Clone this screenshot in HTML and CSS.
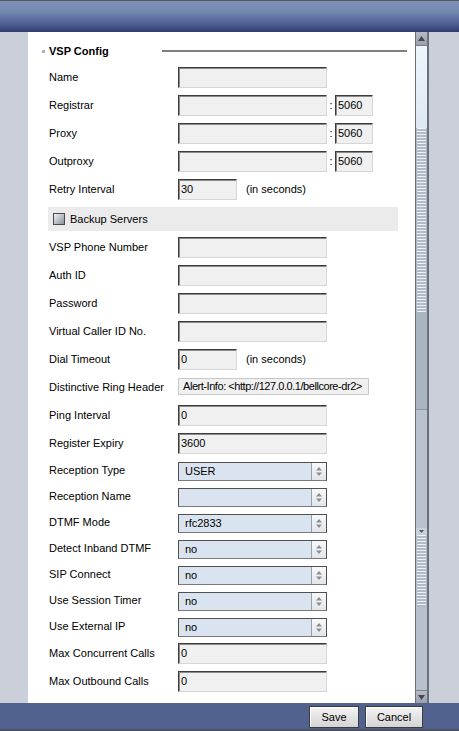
FILE: index.html
```html
<!DOCTYPE html>
<html>
<head>
<meta charset="utf-8">
<link rel="stylesheet" href="styles.css">
</head>
<body>
<div class="app">
  <header class="topbar"></header>
  <div class="middle">
    <div class="gutter"></div>
    <main class="content">
      <div class="section-head">
        <span class="bullet"></span>
        <span class="section-title">VSP Config</span>
        <span class="section-line"></span>
      </div>

      <div class="row"><span class="label">Name</span><span class="field"></span></div>
      <div class="row"><span class="label">Registrar</span><span class="field"></span><span class="colon">:</span><span class="field port">5060</span></div>
      <div class="row"><span class="label">Proxy</span><span class="field"></span><span class="colon">:</span><span class="field port">5060</span></div>
      <div class="row"><span class="label">Outproxy</span><span class="field"></span><span class="colon">:</span><span class="field port">5060</span></div>
      <div class="row"><span class="label">Retry Interval</span><span class="field short">30</span><span class="hint">(in seconds)</span></div>

      <div class="backup-bar"><span class="checkbox"></span><span class="backup-text">Backup Servers</span></div>

      <div class="row"><span class="label">VSP Phone Number</span><span class="field"></span></div>
      <div class="row"><span class="label">Auth ID</span><span class="field"></span></div>
      <div class="row"><span class="label">Password</span><span class="field"></span></div>
      <div class="row"><span class="label">Virtual Caller ID No.</span><span class="field"></span></div>
      <div class="row"><span class="label">Dial Timeout</span><span class="field short">0</span><span class="hint">(in seconds)</span></div>
      <div class="row"><span class="label">Distinctive Ring Header</span><span class="field readonly">Alert-Info: &lt;http://127.0.0.1/bellcore-dr2&gt;</span></div>
      <div class="row"><span class="label">Ping Interval</span><span class="field">0</span></div>
      <div class="row"><span class="label">Register Expiry</span><span class="field">3600</span></div>

      <div class="row srow"><span class="label">Reception Type</span><span class="select"><span class="val">USER</span><span class="spin"><svg width="14" height="17" viewBox="0 0 14 17"><path d="M4 7.5h6l-3-3.5z" fill="#8a8f96"/><path d="M4 9.5h6l-3 3.5z" fill="#8a8f96"/></svg></span></span></div>
      <div class="row srow"><span class="label">Reception Name</span><span class="select"><span class="val"></span><span class="spin"><svg width="14" height="17" viewBox="0 0 14 17"><path d="M4 7.5h6l-3-3.5z" fill="#8a8f96"/><path d="M4 9.5h6l-3 3.5z" fill="#8a8f96"/></svg></span></span></div>
      <div class="row srow"><span class="label">DTMF Mode</span><span class="select"><span class="val">rfc2833</span><span class="spin"><svg width="14" height="17" viewBox="0 0 14 17"><path d="M4 7.5h6l-3-3.5z" fill="#8a8f96"/><path d="M4 9.5h6l-3 3.5z" fill="#8a8f96"/></svg></span></span></div>
      <div class="row srow"><span class="label">Detect Inband DTMF</span><span class="select"><span class="val">no</span><span class="spin"><svg width="14" height="17" viewBox="0 0 14 17"><path d="M4 7.5h6l-3-3.5z" fill="#8a8f96"/><path d="M4 9.5h6l-3 3.5z" fill="#8a8f96"/></svg></span></span></div>
      <div class="row srow"><span class="label">SIP Connect</span><span class="select"><span class="val">no</span><span class="spin"><svg width="14" height="17" viewBox="0 0 14 17"><path d="M4 7.5h6l-3-3.5z" fill="#8a8f96"/><path d="M4 9.5h6l-3 3.5z" fill="#8a8f96"/></svg></span></span></div>
      <div class="row srow"><span class="label">Use Session Timer</span><span class="select"><span class="val">no</span><span class="spin"><svg width="14" height="17" viewBox="0 0 14 17"><path d="M4 7.5h6l-3-3.5z" fill="#8a8f96"/><path d="M4 9.5h6l-3 3.5z" fill="#8a8f96"/></svg></span></span></div>
      <div class="row srow"><span class="label">Use External IP</span><span class="select"><span class="val">no</span><span class="spin"><svg width="14" height="17" viewBox="0 0 14 17"><path d="M4 7.5h6l-3-3.5z" fill="#8a8f96"/><path d="M4 9.5h6l-3 3.5z" fill="#8a8f96"/></svg></span></span></div>

      <div class="row"><span class="label">Max Concurrent Calls</span><span class="field">0</span></div>
      <div class="row"><span class="label">Max Outbound Calls</span><span class="field">0</span></div>
    </main>
    <div class="scrollbar">
      <div class="sb-btn"><svg width="11" height="13" viewBox="0 0 11 13"><path d="M2 9h7L5.5 4z" fill="#3f4756"/></svg></div>
      <div class="sb-track-light"></div>
      <div class="sb-grip"><div class="grip-lines"></div></div>
      <div class="sb-thumb-end"></div>
      <div class="sb-track"></div>
      <div class="sb-mini"><svg width="11" height="7" viewBox="0 0 11 7"><path d="M3 2h5L5.5 5z" fill="#505868"/></svg></div>
      <div class="sb-grip2"><div class="grip-lines"></div></div>
      <div class="sb-plain"></div>
      <div class="sb-btn down"><svg width="11" height="13" viewBox="0 0 11 13"><path d="M2 4h7L5.5 9z" fill="#3f4756"/></svg></div>
    </div>
    <div class="gutter right"></div>
  </div>
  <footer class="bottombar">
    <button class="btn save">Save</button>
    <button class="btn cancel">Cancel</button>
  </footer>
</div>
</body>
</html>
```
FILE: styles.css
```css
* { box-sizing: border-box; }
html, body { margin: 0; padding: 0; }
body {
  font-family: "Liberation Sans", Arial, sans-serif;
  font-size: 11px;
  color: #000;
  background: #cbcfd9;
}
.app {
  width: 459px;
  height: 731px;
  display: flex;
  flex-direction: column;
  overflow: hidden;
}
.topbar {
  height: 32px;
  flex: none;
  border-top: 1px solid #5a5a5e;
  background: linear-gradient(#8091b6 0%, #7387b0 35%, #4e5f92 75%, #2d3b72 100%);
}
.middle {
  flex: 1;
  display: flex;
  min-height: 0;
}
.gutter {
  width: 28px;
  flex: none;
  background: #cbcfd9;
}
.gutter.right { width: 30px; }
.content {
  width: 387px;
  flex: none;
  background: #fff;
  padding-top: 7px;
  overflow: hidden;
}
.section-head {
  height: 24px;
  display: flex;
  align-items: center;
}
.bullet {
  width: 3px;
  height: 3px;
  margin-left: 14px;
  margin-right: 4px;
  background: #a9b4c8;
}
.section-title { font-weight: bold; }
.section-line {
  width: 245px;
  height: 2px;
  margin-left: auto;
  margin-right: 8px;
  background: #808080;
}
.row {
  display: flex;
  height: 28px;
  padding-left: 21px;
}
.label {
  width: 129px;
  flex: none;
  line-height: 28px;
  white-space: nowrap;
}
.field {
  width: 149px;
  height: 21px;
  margin-top: 4px;
  flex: none;
  background: #f0f0f0;
  border: 1px solid;
  border-color: #3c3c3c #d6d6d6 #d6d6d6 #3c3c3c;
  box-shadow: inset 1px 1px 0 #8a8a8a;
  padding-left: 2px;
  line-height: 19px;
  white-space: nowrap;
  overflow: hidden;
}
.field.short { width: 59px; }
.field.port { width: 38px; }
.field.readonly {
  width: 191px;
  height: 17px;
  margin-top: 5px;
  border-color: #c8c8c8;
  box-shadow: none;
  padding-left: 4px;
  line-height: 15px;
  letter-spacing: -0.45px;
}
.colon {
  width: 8px;
  text-align: center;
  line-height: 28px;
}
.hint {
  margin-left: 9px;
  line-height: 28px;
}
.backup-bar {
  margin: 4px 0 2px 20px;
  width: 350px;
  height: 24px;
  background: #ebebeb;
  display: flex;
  align-items: center;
}
.checkbox {
  width: 12px;
  height: 12px;
  margin-left: 5px;
  margin-right: 5px;
  border: 1px solid #4a4a4a;
  background: linear-gradient(135deg, #eef0f4 0%, #b4b8c0 60%, #8c9098 100%);
}
.row.srow { height: 26px; }
.srow .label { line-height: 26px; }
.select {
  width: 149px;
  height: 19px;
  margin-top: 5px;
  flex: none;
  display: flex;
  background: #dae4f0;
  border: 1px solid #505050;
  border-bottom-color: #7a7a7a;
}
.select .val {
  flex: 1;
  padding-left: 6px;
  line-height: 16px;
}
.spin {
  width: 15px;
  flex: none;
  border-left: 1px solid #9aa0a8;
  background: linear-gradient(#f6f8fa, #e2e6ea);
  display: flex;
  align-items: center;
  justify-content: center;
}
.spin svg { display: block; }
.scrollbar {
  width: 14px;
  flex: none;
  display: flex;
  flex-direction: column;
  border-left: 1px solid #6c7078;
  border-right: 2px solid #6a707c;
  background: #b6c1cd;
}
.sb-btn {
  height: 14px;
  flex: none;
  background: linear-gradient(#b8bcc4, #9aa0aa);
  border-bottom: 1px solid #7a808a;
  display: flex;
  align-items: center;
  justify-content: center;
}
.sb-btn.down {
  height: 13px;
  border-bottom: none;
  border-top: 1px solid #7a808a;
}
.sb-track-light {
  height: 82px;
  flex: none;
  background: linear-gradient(#eef6fc, #dce8f2);
}
.sb-grip {
  height: 184px;
  flex: none;
  background: #b0bbc7;
  padding: 0 1px 0 1px;
}
.grip-lines {
  height: 100%;
  background: repeating-linear-gradient(#eef2f6 0 1px, #b0bbc7 1px 3px);
}
.sb-thumb-end {
  height: 98px;
  flex: none;
  background: #aab5c2;
  border-bottom: 1px solid #8c96a2;
}
.sb-track {
  height: 118px;
  flex: none;
  background: #b8c3cf;
}
.sb-mini {
  height: 7px;
  flex: none;
  background: #c8d0da;
  display: flex;
  justify-content: center;
}
.sb-grip2 {
  height: 72px;
  flex: none;
  background: #b6c1cd;
  padding: 0 1px;
}
.sb-plain {
  height: 83px;
  flex: none;
  background: #b6c1cd;
}
.bottombar {
  height: 28px;
  flex: none;
  background: #52628f;
  border-bottom: 2px solid #4c5060;
  display: flex;
  justify-content: flex-end;
  align-items: flex-start;
  padding-top: 3px;
  padding-right: 36px;
  gap: 6px;
}
.btn {
  height: 22px;
  font-family: "Liberation Sans", Arial, sans-serif;
  font-size: 11px;
  color: #000;
  border: 1px solid #3c3c3c;
  box-shadow: inset 1px 1px 0 #fff;
  background: linear-gradient(#f4f4f4, #d4d4d4);
  padding: 0;
  margin: 0;
}
.btn.save { width: 50px; }
.btn.cancel { width: 58px; }
```
